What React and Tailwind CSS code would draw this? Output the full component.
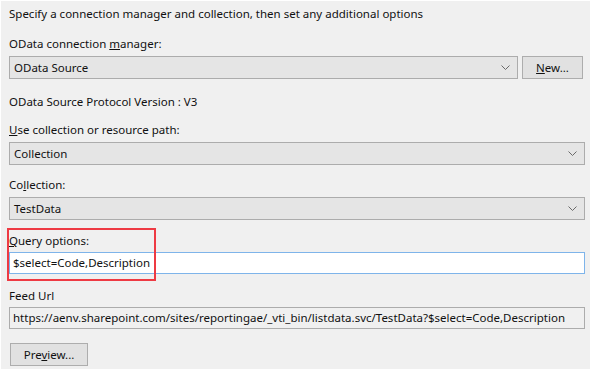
import React from "react";

const Chevron = () => (
  <svg width="9" height="5" viewBox="0 0 9 5" className="shrink-0">
    <path d="M0.5 0.5 L4.5 4.5 L8.5 0.5" fill="none" stroke="#6a6a6a" strokeWidth="1" />
  </svg>
);

const Select = ({ value, className = "" }) => (
  <div className={`h-[23px] flex items-center justify-between bg-[#e5e5e5] border border-[#acacac] pl-[4px] pr-[7px] ${className}`}>
    <span>{value}</span>
    <Chevron />
  </div>
);

export default function App() {
  return (
    <div
      className="w-[592px] h-[371px] bg-[#f0f0f0] border-t border-r-2 border-b-2 border-l border-white flex flex-col pl-[8px] pr-[5px] text-[11.5px] leading-[16px] text-[#111] whitespace-nowrap"
      style={{ fontFamily: '"Noto Sans", "Open Sans", sans-serif' }}
    >
      <div className="mt-[5px] h-[16px]">
        Specify a connection manager and collection, then set any additional options
      </div>

      <div className="mt-[14px] h-[16px]">
        OData connection <span className="underline">m</span>anager:
      </div>
      <div className="mt-[4px] flex gap-[4px]">
        <Select value="OData Source" className="w-[509px]" />
        <div className="w-[61px] h-[23px] bg-[#e1e1e1] border border-[#adadad] flex items-center justify-center">
          <span><span className="underline">N</span>ew...</span>
        </div>
      </div>

      <div className="mt-[15px] h-[16px]">OData Source Protocol Version : V3</div>

      <div className="mt-[12px] h-[16px]">
        <span className="underline">U</span>se collection or resource path:
      </div>
      <Select value="Collection" className="mt-[4px] w-[576px]" />

      <div className="mt-[12px] h-[16px]">
        Co<span className="underline">l</span>lection:
      </div>
      <Select value="TestData" className="mt-[4px] w-[576px]" />

      <div className="relative mt-[13px]">
        <div className="h-[16px]">
          <span className="underline">Q</span>uery options:
        </div>
        <div className="mt-[3px] h-[22px] w-[576px] bg-white border border-[#7eb4ea] flex items-center pl-[3px]">
          $select=Code,Description
        </div>
        <div className="absolute left-[-2px] top-[-5px] w-[149px] h-[53px] border-2 border-[#ee3a43] pointer-events-none" />
      </div>

      <div className="mt-[14px] h-[16px]">Feed Url</div>
      <div className="mt-[3px] h-[22px] w-[576px] bg-[#f0f0f0] border border-[#acacac] flex items-center pl-[3px] overflow-hidden">
        https://aenv.sharepoint.com/sites/reportingae/_vti_bin/listdata.svc/TestData?$select=Code,Description
      </div>

      <div className="mt-[14px] ml-[1px] w-[78px] h-[23px] bg-[#e1e1e1] border border-[#adadad] flex items-center justify-center">
        <span>Pre<span className="underline">v</span>iew...</span>
      </div>
    </div>
  );
}
